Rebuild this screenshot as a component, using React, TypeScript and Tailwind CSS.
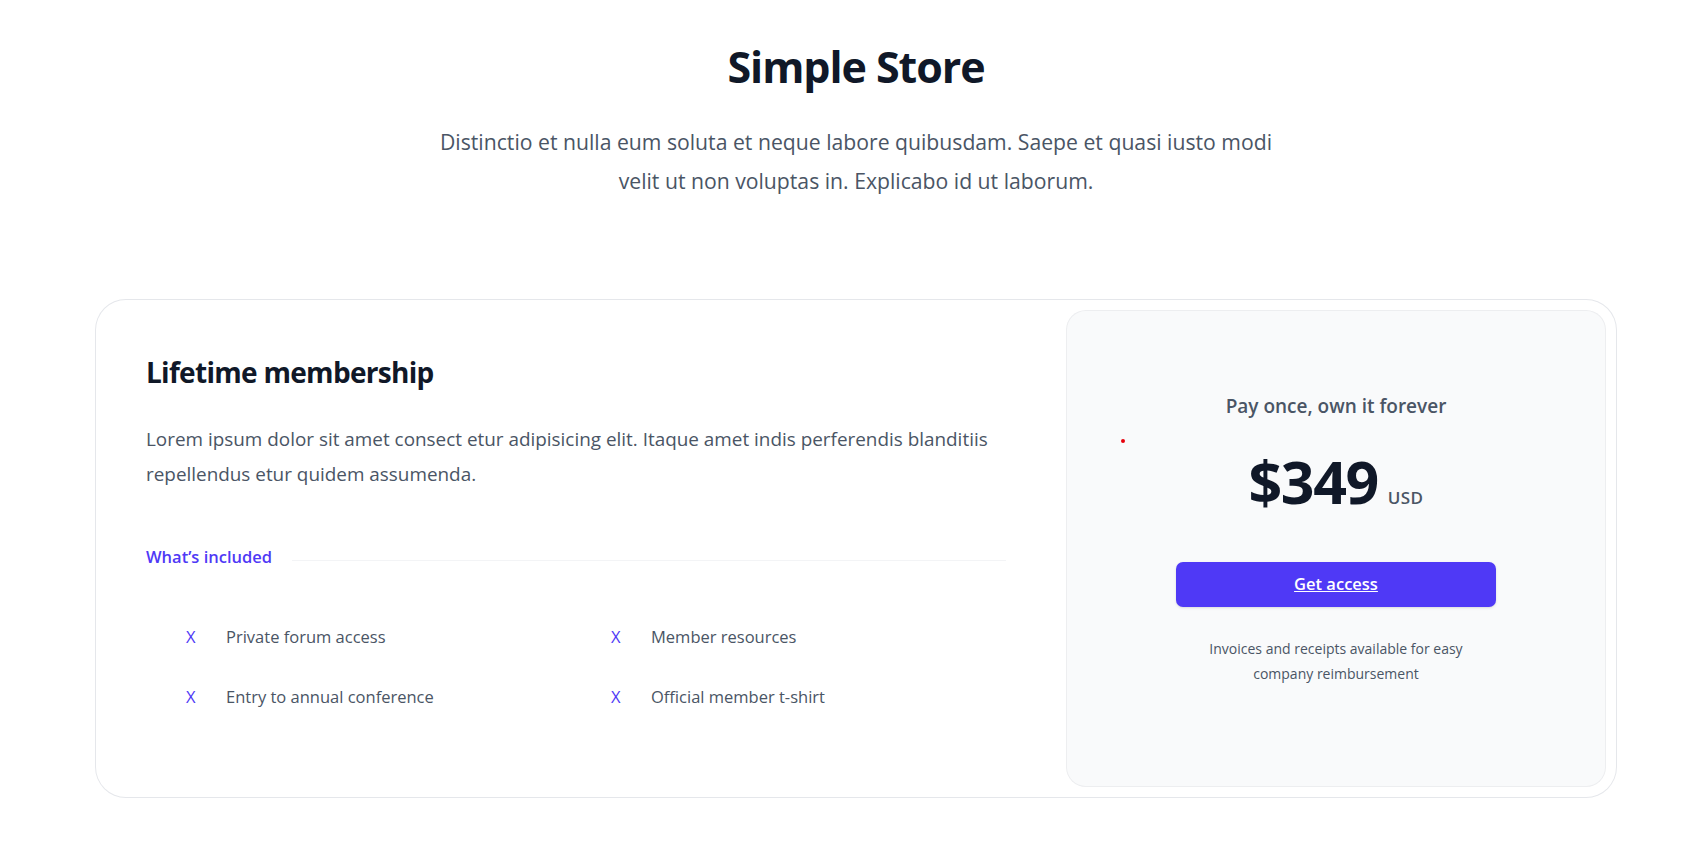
import React from "react";

const features = [
  "Private forum access",
  "Member resources",
  "Entry to annual conference",
  "Official member t-shirt",
];

const App = () => {
  return (
    <div className="min-h-screen bg-white font-['Open_Sans',sans-serif] pl-[5px]">
      <div className="flex flex-col items-center pt-[42px] pb-[60px]">
        {/* Header */}
        <h2 className="text-[43px] leading-[50px] font-bold tracking-tight text-gray-900">
          Simple Store
        </h2>
        <p className="mt-[30px] max-w-[840px] text-center text-[21.2px] leading-[39px] text-gray-600">
          Distinctio et nulla eum soluta et neque labore quibusdam. Saepe et quasi iusto modi
          velit ut non voluptas in. Explicabo id ut laborum.
        </p>

        {/* Pricing card */}
        <div className="mt-[100px] flex w-[1520px] rounded-[30px] ring-1 ring-gray-200">
          {/* Left section */}
          <div className="flex-auto pt-[52px] px-[50px] pb-[85px]">
            <h3 className="text-[28px] leading-[40px] font-bold tracking-tight text-gray-900">
              Lifetime membership
            </h3>
            <p className="mt-[30px] text-[18.9px] leading-[35px] text-gray-600">
              Lorem ipsum dolor sit amet consect etur adipisicing elit. Itaque amet indis perferendis
              blanditiis repellendus etur quidem assumenda.
            </p>
            <div className="mt-[50px] flex items-center gap-x-[20px]">
              <h4 className="flex-none text-[16.5px] leading-[30px] font-semibold text-indigo-600">
                What’s included
              </h4>
              <div className="mt-[6px] h-px flex-auto bg-gray-100" />
            </div>
            <ul className="mt-[50px] grid grid-cols-2 gap-x-[30px] gap-y-[30px] pl-[40px] text-[16.5px] leading-[30px] text-gray-600">
              {features.map((feature) => (
                <li key={feature} className="flex gap-x-[15px]">
                  <span className="w-[25px] flex-none text-indigo-600">X</span>
                  {feature}
                </li>
              ))}
            </ul>
          </div>

          {/* Right section */}
          <div className="w-[560px] flex-shrink-0 p-[10px]">
            <div className="relative h-full rounded-[20px] bg-gray-50 pt-[81px] text-center ring-1 ring-inset ring-gray-900/5">
              <span className="absolute left-[55px] top-[129px] h-[4px] w-[4px] rounded-full bg-red-600" />
              <p className="text-[19px] leading-[30px] font-semibold text-gray-600">
                Pay once, own it forever
              </p>
              <p className="mt-[30px] flex items-baseline justify-center gap-x-[10px]">
                <span className="text-[59px] leading-[60px] font-bold tracking-tight text-gray-900">
                  $349
                </span>
                <span className="text-[17px] leading-[30px] font-semibold tracking-wide text-gray-600">
                  USD
                </span>
              </p>
              <a
                href="#"
                className="mx-auto mt-[49px] flex h-[45px] w-[320px] items-center justify-center rounded-[7px] bg-indigo-600 text-[16.5px] font-semibold text-white underline shadow-sm"
              >
                Get access
              </a>
              <p className="mx-auto mt-[29px] max-w-[290px] text-[14px] leading-[25px] text-gray-600">
                Invoices and receipts available for easy company reimbursement
              </p>
            </div>
          </div>
        </div>
      </div>
    </div>
  );
};

export default App;
